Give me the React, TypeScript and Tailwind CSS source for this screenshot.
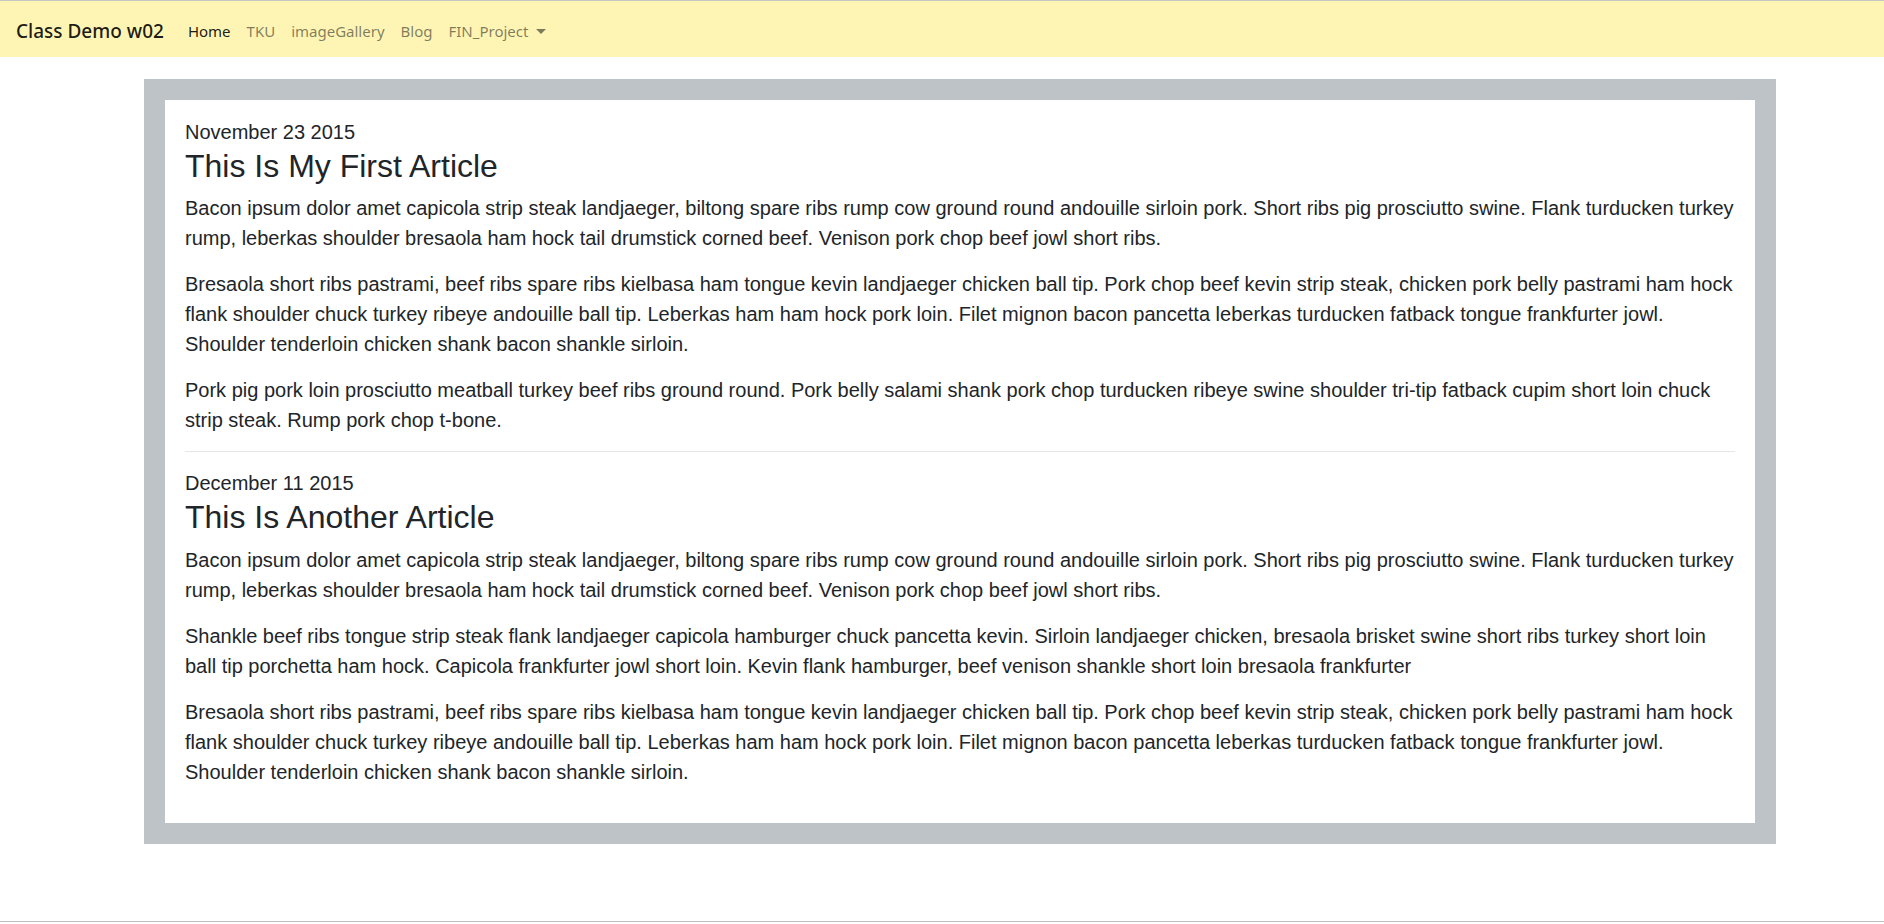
import React from 'react'

const articles = [
  {
    date: 'November 23 2015',
    title: 'This Is My First Article',
    paragraphs: [
      'Bacon ipsum dolor amet capicola strip steak landjaeger, biltong spare ribs rump cow ground round andouille sirloin pork. Short ribs pig prosciutto swine. Flank turducken turkey rump, leberkas shoulder bresaola ham hock tail drumstick corned beef. Venison pork chop beef jowl short ribs.',
      'Bresaola short ribs pastrami, beef ribs spare ribs kielbasa ham tongue kevin landjaeger chicken ball tip. Pork chop beef kevin strip steak, chicken pork belly pastrami ham hock flank shoulder chuck turkey ribeye andouille ball tip. Leberkas ham ham hock pork loin. Filet mignon bacon pancetta leberkas turducken fatback tongue frankfurter jowl. Shoulder tenderloin chicken shank bacon shankle sirloin.',
      'Pork pig pork loin prosciutto meatball turkey beef ribs ground round. Pork belly salami shank pork chop turducken ribeye swine shoulder tri-tip fatback cupim short loin chuck strip steak. Rump pork chop t-bone.',
    ],
  },
  {
    date: 'December 11 2015',
    title: 'This Is Another Article',
    paragraphs: [
      'Bacon ipsum dolor amet capicola strip steak landjaeger, biltong spare ribs rump cow ground round andouille sirloin pork. Short ribs pig prosciutto swine. Flank turducken turkey rump, leberkas shoulder bresaola ham hock tail drumstick corned beef. Venison pork chop beef jowl short ribs.',
      'Shankle beef ribs tongue strip steak flank landjaeger capicola hamburger chuck pancetta kevin. Sirloin landjaeger chicken, bresaola brisket swine short ribs turkey short loin ball tip porchetta ham hock. Capicola frankfurter jowl short loin. Kevin flank hamburger, beef venison shankle short loin bresaola frankfurter',
      'Bresaola short ribs pastrami, beef ribs spare ribs kielbasa ham tongue kevin landjaeger chicken ball tip. Pork chop beef kevin strip steak, chicken pork belly pastrami ham hock flank shoulder chuck turkey ribeye andouille ball tip. Leberkas ham ham hock pork loin. Filet mignon bacon pancetta leberkas turducken fatback tongue frankfurter jowl. Shoulder tenderloin chicken shank bacon shankle sirloin.',
    ],
  },
]

const links = ['TKU', 'imageGallery', 'Blog']

export default function App() {
  return (
    <div className="h-[922px] border-b border-[#bdbdbd] bg-white text-[#212529]">
      {/* navbar */}
      <nav className="flex h-[57px] items-center border-t border-[#c6c6c6] bg-[#fef5b4] px-4 pt-[4px] font-['Noto_Sans',sans-serif]">
        <a href="#" className="mr-4 text-[19px] font-medium text-black/90">
          Class Demo w02
        </a>
        <ul className="flex items-center text-[15px]">
          <li>
            <a href="#" className="block px-2 py-2 text-black/90">Home</a>
          </li>
          {links.map((l) => (
            <li key={l}>
              <a href="#" className="block px-2 py-2 text-black/50">{l}</a>
            </li>
          ))}
          <li>
            <a href="#" className="flex items-center px-2 py-2 text-black/50">
              FIN_Project
              <span className="ml-[8px] mt-[1px] h-0 w-0 border-x-[5px] border-t-[5px] border-x-transparent border-t-black/50"></span>
            </a>
          </li>
        </ul>
      </nav>

      {/* main box */}
      <div className="ml-[144px] mt-[22px] w-[1632px] bg-[#bdc3c7] p-[21px]">
        <div className="bg-white p-5 font-['Liberation_Sans',Arial,sans-serif]">
          {articles.map((a, i) => (
            <div key={a.title}>
              <div className="mb-[3px] text-[20px] leading-[24px]">{a.date}</div>
              <h2 className="mb-2 text-[32px] leading-[38.4px]">{a.title}</h2>
              {a.paragraphs.map((p, j) => (
                <p key={j} className="mb-4 text-[20px] leading-[30px]">{p}</p>
              ))}
              {i < articles.length - 1 && (
                <hr className="mb-[19px] mt-4 border-t border-black/10" />
              )}
            </div>
          ))}
        </div>
      </div>
    </div>
  )
}
